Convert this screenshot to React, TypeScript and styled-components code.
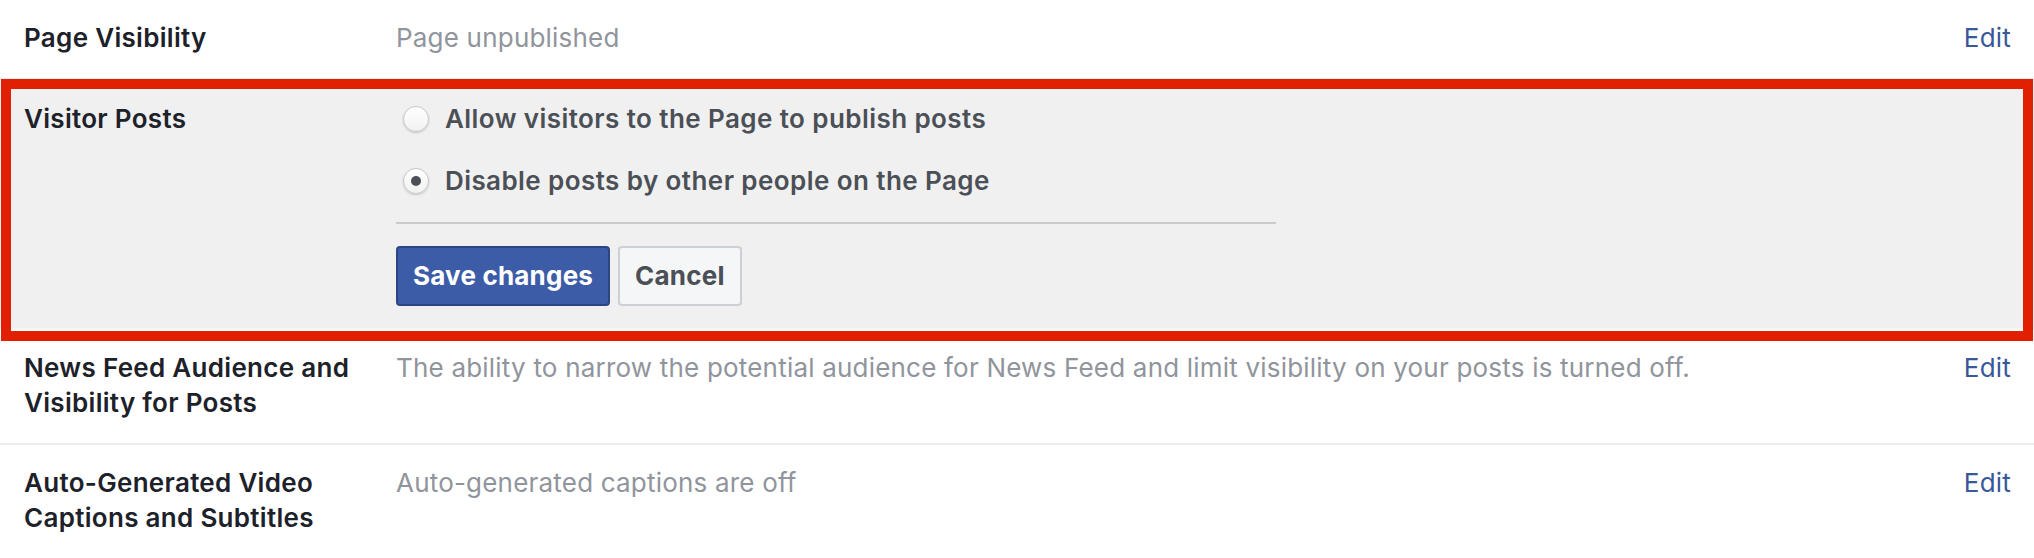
import React from "react";
import styled, { createGlobalStyle } from "styled-components";

const GlobalStyle = createGlobalStyle`
  html, body {
    margin: 0;
    padding: 0;
    background: #ffffff;
  }
  body {
    font-family: Inter, "Noto Sans", "Liberation Sans", sans-serif;
    overflow: hidden;
    -webkit-font-smoothing: antialiased;
  }
`;

const List = styled.div`
  width: 2034px;
`;

const Row = styled.div<{ $editing?: boolean }>`
  position: relative;
  display: grid;
  grid-template-columns: 372px 1fr auto;
  align-items: start;
  padding: ${(p) => (p.$editing ? "21px 23px 22px 24px" : "20px 23px 23px 24px")};
  border-bottom: 2px solid ${(p) => (p.$editing ? "#f7f7f8" : "#e9ebee")};
  background: ${(p) => (p.$editing ? "#f0f0f0" : "#ffffff")};
  font-size: 26px;
  line-height: 35px;
`;

const Label = styled.div`
  font-weight: 600;
  color: #1d2129;
  letter-spacing: 0.3px;
  padding-right: 16px;
`;

const Desc = styled.div`
  color: #90949c;
  letter-spacing: 0.2px;
  padding-right: 24px;
`;

const EditLink = styled.a`
  color: #385898;
  letter-spacing: 0.2px;
  text-decoration: none;
  cursor: pointer;
`;

const Highlight = styled.div`
  position: absolute;
  top: -1px;
  left: 1px;
  right: 1px;
  bottom: -13px;
  border: 10px solid #e02000;
  pointer-events: none;
  z-index: 1;
`;

const Options = styled.div`
  width: 880px;
`;

const RadioOption = styled.label`
  display: flex;
  align-items: center;
  gap: 16px;
  padding-left: 7px;
  font-weight: 600;
  letter-spacing: 0.42px;
  color: #4b4f56;
  cursor: pointer;
  & + & {
    margin-top: 27px;
  }
`;

const RadioCircle = styled.span<{ $checked?: boolean }>`
  position: relative;
  flex: none;
  width: 26px;
  height: 26px;
  box-sizing: border-box;
  border-radius: 50%;
  border: 1px solid #c6c8cc;
  background: linear-gradient(#ffffff, #f1f1f1);
  box-shadow: 0 1px 2px rgba(0, 0, 0, 0.18);
  &::after {
    content: "";
    display: ${(p) => (p.$checked ? "block" : "none")};
    position: absolute;
    left: 50%;
    top: 50%;
    width: 10px;
    height: 10px;
    margin: -5px 0 0 -5px;
    border-radius: 50%;
    background: #4b4f56;
  }
`;

const Separator = styled.div`
  height: 2px;
  background: #cbcbcb;
  margin: 24px 0 22px;
`;

const Buttons = styled.div`
  display: flex;
  gap: 8px;
`;

const Button = styled.button<{ $primary?: boolean }>`
  height: 60px;
  box-sizing: border-box;
  padding: 0 15px;
  border-radius: 4px;
  border: 2px solid ${(p) => (p.$primary ? "#2b4682" : "#ccd0d5")};
  background: ${(p) => (p.$primary ? "#3d5ca8" : "#f5f6f7")};
  color: ${(p) => (p.$primary ? "#ffffff" : "#4b4f56")};
  font-family: Inter, "Noto Sans", "Liberation Sans", sans-serif;
  font-size: 26px;
  font-weight: 700;
  letter-spacing: 0.2px;
  line-height: 1;
  cursor: pointer;
`;

const rows = [
  {
    label: "News Feed Audience and Visibility for Posts",
    desc: "The ability to narrow the potential audience for News Feed and limit visibility on your posts is turned off.",
  },
  {
    label: "Auto-Generated Video Captions and Subtitles",
    desc: "Auto-generated captions are off",
  },
];

export default function App() {
  const [choice, setChoice] = React.useState<"allow" | "disable">("disable");
  return (
    <>
      <GlobalStyle />
      <List>
        <Row>
          <Label>Page Visibility</Label>
          <Desc>Page unpublished</Desc>
          <EditLink>Edit</EditLink>
        </Row>
        <Row $editing>
          <Label>Visitor Posts</Label>
          <Options>
            <RadioOption onClick={() => setChoice("allow")}>
              <RadioCircle $checked={choice === "allow"} />
              Allow visitors to the Page to publish posts
            </RadioOption>
            <RadioOption onClick={() => setChoice("disable")}>
              <RadioCircle $checked={choice === "disable"} />
              Disable posts by other people on the Page
            </RadioOption>
            <Separator />
            <Buttons>
              <Button $primary>Save changes</Button>
              <Button>Cancel</Button>
            </Buttons>
          </Options>
          <span />
          <Highlight />
        </Row>
        {rows.map((r) => (
          <Row key={r.label}>
            <Label>{r.label}</Label>
            <Desc>{r.desc}</Desc>
            <EditLink>Edit</EditLink>
          </Row>
        ))}
      </List>
    </>
  );
}
